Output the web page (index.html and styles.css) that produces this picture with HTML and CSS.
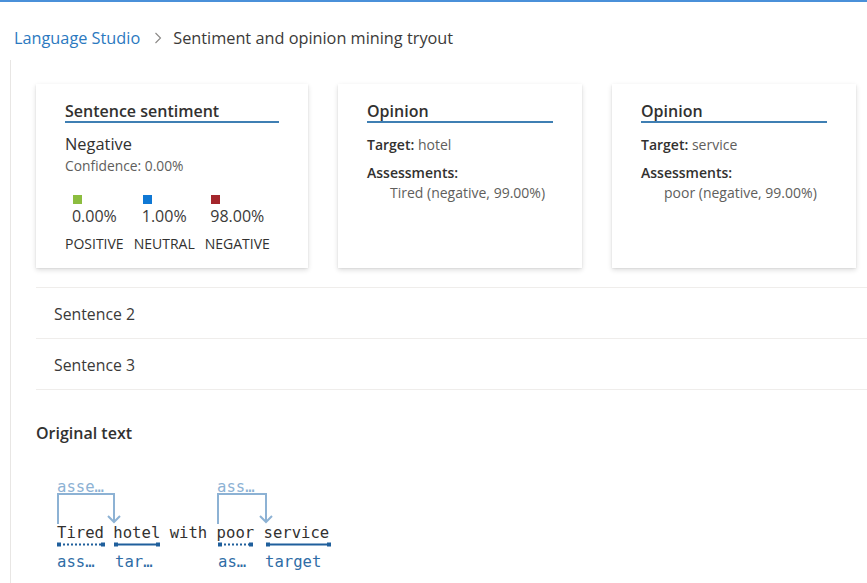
FILE: index.html
```html
<!DOCTYPE html>
<html lang="en">
<head>
<meta charset="utf-8">
<title>Sentiment and opinion mining tryout</title>
<link rel="stylesheet" href="styles.css">
</head>
<body>
<div class="topbar"></div>
<nav class="breadcrumb">
  <a class="crumb-link">Language Studio</a>
  <svg class="chev" width="8" height="12" viewBox="0 0 8 12"><path d="M1.5 1 L6.5 6 L1.5 11" fill="none" stroke="#8a8886" stroke-width="1.1"/></svg>
  <span class="crumb-current">Sentiment and opinion mining tryout</span>
</nav>
<main class="content">
  <div class="cards">
    <section class="card card-wide">
      <h2 class="card-title">Sentence sentiment</h2>
      <div class="sent-label">Negative</div>
      <div class="confidence">Confidence: 0.00%</div>
      <div class="scores">
        <div class="score">
          <div class="score-val"><span class="sw sw-pos"></span><span class="pct">0.00%</span></div>
          <div class="score-name">POSITIVE</div>
        </div>
        <div class="score">
          <div class="score-val"><span class="sw sw-neu"></span><span class="pct">1.00%</span></div>
          <div class="score-name">NEUTRAL</div>
        </div>
        <div class="score">
          <div class="score-val"><span class="sw sw-neg"></span><span class="pct">98.00%</span></div>
          <div class="score-name">NEGATIVE</div>
        </div>
      </div>
    </section>
    <section class="card">
      <h2 class="card-title">Opinion</h2>
      <div class="field"><b>Target:</b> hotel</div>
      <div class="field field-gap"><b>Assessments:</b></div>
      <div class="assess">Tired (negative, 99.00%)</div>
    </section>
    <section class="card">
      <h2 class="card-title">Opinion</h2>
      <div class="field"><b>Target:</b> service</div>
      <div class="field field-gap"><b>Assessments:</b></div>
      <div class="assess">poor (negative, 99.00%)</div>
    </section>
  </div>

  <div class="rows">
    <div class="row">Sentence 2</div>
    <div class="row">Sentence 3</div>
  </div>

  <h3 class="orig-title">Original text</h3>
  <svg class="diagram" width="320" height="110" viewBox="0 0 320 110">
    <g class="top-labels">
      <text x="21" y="22">asse…</text>
      <text x="181" y="22">ass…</text>
    </g>
    <g class="brackets" fill="none" stroke="#8db2d4" stroke-width="2">
      <path d="M22 54 V24 H78 V52"/>
      <path d="M72 46 L78 52 L84 46"/>
      <path d="M182 54 V24 H230 V52"/>
      <path d="M224 46 L230 52 L236 46"/>
    </g>
    <text class="sentence" x="21" y="68">Tired hotel with poor service</text>
    <g class="underlines" stroke="#1f5f9c" stroke-width="2" fill="#1f5f9c">
      <line x1="23" y1="74.5" x2="66" y2="74.5" stroke-dasharray="2 2"/>
      <rect x="21" y="72.5" width="4" height="4" stroke="none"/>
      <rect x="65" y="72.5" width="4" height="4" stroke="none"/>
      <line x1="79" y1="74.5" x2="123" y2="74.5"/>
      <rect x="78" y="72.5" width="4" height="4" stroke="none"/>
      <rect x="120" y="72.5" width="4" height="4" stroke="none"/>
      <line x1="184" y1="74.5" x2="215" y2="74.5" stroke-dasharray="2 2"/>
      <rect x="182" y="72.5" width="4" height="4" stroke="none"/>
      <rect x="213" y="72.5" width="4" height="4" stroke="none"/>
      <line x1="231" y1="74.5" x2="294" y2="74.5"/>
      <rect x="230" y="72.5" width="4" height="4" stroke="none"/>
      <rect x="291" y="72.5" width="4" height="4" stroke="none"/>
    </g>
    <g class="bottom-labels">
      <text x="21" y="97">ass…</text>
      <text x="79" y="97">tar…</text>
      <text x="182" y="97">as…</text>
      <text x="229" y="97">target</text>
    </g>
  </svg>
</main>
</body>
</html>
```

FILE: styles.css
```css
* { box-sizing: border-box; }
html, body { margin: 0; padding: 0; background: #ffffff; }
body {
  font-family: "Open Sans", "Noto Sans", sans-serif;
  color: #323130;
  width: 867px;
  height: 583px;
  overflow: hidden;
  display: flex;
  flex-direction: column;
}
.topbar { height: 2px; background: #4a90d9; flex: none; }

.breadcrumb {
  flex: none;
  display: flex;
  align-items: center;
  padding: 26px 0 12px 14px;
  height: 58px;
  font-size: 16.3px;
  line-height: 20px;
}
.crumb-link { color: #2b79c0; text-decoration: none; }
.chev { margin: 0 11px 0 14px; }
.crumb-current { color: #3b3a39; }

.content {
  flex: 1;
  margin-left: 10px;
  border-left: 1px solid #e8e6e4;
  padding-left: 25px;
  padding-top: 24px;
}

.cards { display: flex; gap: 30px; }
.card {
  width: 244px;
  background: #fff;
  padding: 17px 29px 15px 29px;
  box-shadow: 0 2px 5px rgba(0,0,0,0.14), 0 0.5px 1.5px rgba(0,0,0,0.10);
}
.card-wide { width: 272px; }
.card-title {
  margin: 0;
  font-size: 16px;
  font-weight: 600;
  line-height: 20px;
  color: #323130;
  border-bottom: 2px solid #3f7fb3;
}
.sent-label { margin-top: 10px; font-size: 16.4px; line-height: 22px; color: #323130; }
.confidence { margin-top: 2px; font-size: 13.8px; line-height: 18px; color: #605e5c; }
.scores { display: flex; gap: 10px; margin-top: 20px; }
.score { display: flex; flex-direction: column; align-items: center; }
.score-val { display: flex; flex-direction: column; align-items: flex-start; }
.sw { width: 9px; height: 9px; margin-left: 1px; margin-bottom: 1px; }
.sw-pos { background: #8cbd3f; }
.sw-neu { background: #0f78d4; }
.sw-neg { background: #a4262c; }
.pct { font-size: 16px; line-height: 22px; color: #3b3a39; }
.score-name { margin-top: 8px; font-size: 14px; line-height: 18px; color: #323130; }

.field { margin-top: 13px; font-size: 14px; line-height: 18px; color: #605e5c; }
.field b { font-weight: 600; color: #323130; }
.field-gap { margin-top: 10px; }
.assess { padding-left: 23px; font-size: 14px; line-height: 18px; color: #605e5c; margin-top: 2px; }

.rows { margin-top: 19px; margin-right: -20px; }
.row {
  border-top: 1px solid #efedeb;
  height: 51px;
  padding: 2px 0 0 18px;
  line-height: 48px;
  font-size: 15.8px;
  color: #3b3a39;
}
.row:last-child { border-bottom: 1px solid #efedeb; height: 52px; }

.orig-title {
  margin: 32px 0 0 0;
  font-size: 16px;
  font-weight: 600;
  line-height: 22px;
  color: #323130;
}
.diagram { display: block; margin-top: 26px; }
.diagram text { font-family: "DejaVu Sans Mono", "Liberation Mono", monospace; font-size: 15.6px; }
.top-labels text { fill: #8db2d4; }
.sentence { fill: #323130; }
.bottom-labels text { fill: #2f6da6; }
```
